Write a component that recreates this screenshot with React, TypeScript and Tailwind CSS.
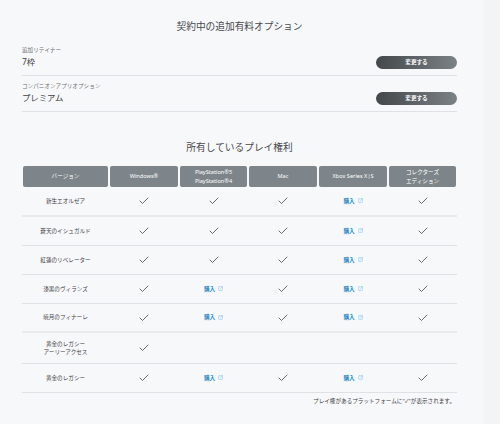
import React from "react";
import { Check, SquareArrowOutUpRight } from "lucide-react";

const font = "font-['Noto_Sans','Noto_Sans_CJK_JP',sans-serif]";

type Cell = "y" | "b" | "";

const headers = [
  ["バージョン"],
  ["Windows®"],
  ["PlayStation®5", "PlayStation®4"],
  ["Mac"],
  ["Xbox Series X|S"],
  ["コレクターズ", "エディション"],
];

const rows: { label: string[]; cells: Cell[]; h: string; border: string }[] = [
  { label: ["新生エオルゼア"], cells: ["y", "y", "y", "b", "y"], h: "h-[30px]", border: "border-b-2 border-[#e9eaec]" },
  { label: ["蒼天のイシュガルド"], cells: ["y", "y", "y", "b", "y"], h: "h-[29px]", border: "border-b border-[#dfe1e4]" },
  { label: ["紅蓮のリベレーター"], cells: ["y", "y", "y", "b", "y"], h: "h-[29px]", border: "border-b border-[#dfe1e4]" },
  { label: ["漆黒のヴィランズ"], cells: ["y", "b", "y", "b", "y"], h: "h-[29px]", border: "border-b border-[#dfe1e4]" },
  { label: ["暁月のフィナーレ"], cells: ["y", "b", "y", "b", "y"], h: "h-[29px]", border: "border-b-2 border-[#e9eaec]" },
  { label: ["黄金のレガシー", "アーリーアクセス"], cells: ["y", "", "", "", ""], h: "h-[31px]", border: "border-b border-[#dfe1e4]" },
  { label: ["黄金のレガシー"], cells: ["y", "b", "y", "b", "y"], h: "h-[29px]", border: "border-b border-[#dfe1e4]" },
];

const options = [
  { label: "追加リテイナー", value: "7枠" },
  { label: "コンパニオンアプリオプション", value: "プレミアム" },
];

const columns = "grid grid-cols-[85px_68px_67px_68px_68px_67px] gap-x-[2px]";

const App: React.FC = () => {
  return (
    <div className={`flex h-[424px] w-[500px] overflow-hidden bg-[#f3f4f6] text-[#4a4d50] ${font}`}>
      <div className="h-full w-[483px] bg-[#f7f8fa] pl-[22px] pr-[26px] pt-[19px]">
        <h2 className="text-center text-[9.7px] leading-[15px] text-[#47494c]">
          契約中の追加有料オプション
        </h2>

        <div className="mt-[6px]">
          {options.map((o) => (
            <div
              key={o.label}
              className="flex h-[36px] items-end justify-between border-b border-[#dfe1e4] pb-[6px]"
            >
              <div>
                <p className="text-[5.6px] leading-[8px] text-[#6f7174]">{o.label}</p>
                <p className="mt-[1px] text-[8.4px] leading-[14px] text-[#3f4144]">{o.value}</p>
              </div>
              <button className="h-[13px] w-[81px] rounded-full bg-gradient-to-r from-[#44484b] to-[#7b8286] text-[5.6px] font-bold leading-[13px] text-white">
                変更する
              </button>
            </div>
          ))}
        </div>

        <h2 className="mt-[28px] text-center text-[9.7px] leading-[15px] text-[#47494c]">
          所有しているプレイ権利
        </h2>

        <div className="mt-[11px] w-[435px]">
          <div className={`${columns} pl-[1px]`}>
            {headers.map((lines) => (
              <div
                key={lines[0]}
                className="flex h-[21px] flex-col items-center justify-center rounded-[2px] bg-[#7d858a] text-[5.6px] leading-[8.5px] text-white"
              >
                {lines.map((l) => (
                  <span key={l}>{l}</span>
                ))}
              </div>
            ))}
          </div>

          {rows.map((row) => (
            <div key={row.label.join("")} className={`${columns} ${row.h} ${row.border} pl-[1px]`}>
              <div className="flex flex-col items-center justify-center text-[5.6px] leading-[8.5px] text-[#3f4144]">
                {row.label.map((l) => (
                  <span key={l}>{l}</span>
                ))}
              </div>
              {row.cells.map((c, i) => (
                <div key={i} className="flex items-center justify-center">
                  {c === "y" && <Check className="h-[12px] w-[12px] text-[#44474a]" strokeWidth={1.6} />}
                  {c === "b" && (
                    <span className="flex items-center gap-[3px] text-[5.6px] font-bold text-[#1a86c8]">
                      購入
                      <SquareArrowOutUpRight className="h-[5px] w-[5px] text-[#5fb2e4]" strokeWidth={2} />
                    </span>
                  )}
                </div>
              ))}
            </div>
          ))}

          <p className="mt-[3px] pr-[2px] text-right text-[5.6px] leading-[10px] text-[#3f4144]">
            プレイ権があるプラットフォームに"✓"が表示されます。
          </p>
        </div>
      </div>
    </div>
  );
};

export default App;
